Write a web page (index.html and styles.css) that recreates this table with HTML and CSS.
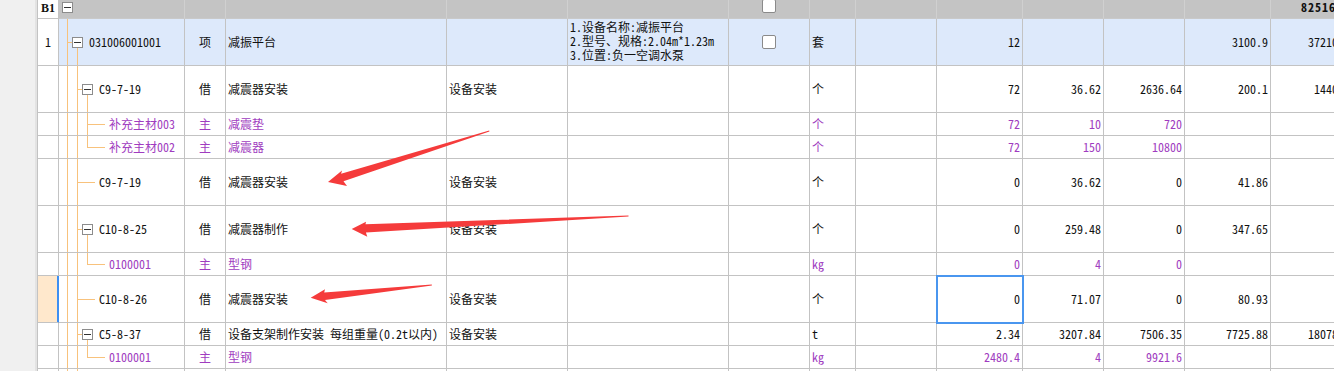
FILE: index.html
```html
<!DOCTYPE html>
<html lang="zh-CN">
<head>
<meta charset="utf-8">
<title>分部分项</title>
<link rel="stylesheet" href="styles.css">
</head>
<body>
<div class="page">
  <div class="strip"></div>
  <div class="sheet">
    <div class="row h">
      <div class="c m b1">B1</div>
      <div class="c tree top"><i class="bx open"><b></b></i></div>
      <div class="c"></div><div class="c"></div><div class="c"></div><div class="c"></div>
      <div class="c m top"><span class="cb hcb"></span></div>
      <div class="c"></div><div class="c"></div><div class="c"></div><div class="c"></div><div class="c"></div><div class="c"></div>
      <div class="c n tot">82516.38</div>
    </div>

    <div class="row sel">
      <div class="c m">1</div>
      <div class="c tree"><i class="g mid"></i><i class="bx open"><b></b></i><span class="t">031006001001</span></div>
      <div class="c m">项</div>
      <div class="c">减振平台</div>
      <div class="c"></div>
      <div class="c d"><span>1.设备名称:减振平台<br>2.型号、规格:2.04m*1.23m<br>3.位置:负一空调水泵</span></div>
      <div class="c m"><span class="cb"></span></div>
      <div class="c">套</div>
      <div class="c"></div>
      <div class="c n">12</div>
      <div class="c"></div>
      <div class="c"></div>
      <div class="c n">3100.9</div>
      <div class="c n">37210.80</div>
    </div>

    <div class="row">
      <div class="c"></div>
      <div class="c tree"><i class="g"></i><i class="g mid"></i><i class="bx open"><b></b></i><span class="t">C9-7-19</span></div>
      <div class="c m">借</div>
      <div class="c">减震器安装</div>
      <div class="c">设备安装</div>
      <div class="c"></div>
      <div class="c"></div>
      <div class="c">个</div>
      <div class="c"></div>
      <div class="c n">72</div>
      <div class="c n">36.62</div>
      <div class="c n">2636.64</div>
      <div class="c n">200.1</div>
      <div class="c n">14407.2</div>
    </div>

    <div class="row s mat">
      <div class="c"></div>
      <div class="c tree"><i class="g"></i><i class="g"></i><i class="g mid"></i><i class="lf"></i><span class="t">补充主材003</span></div>
      <div class="c m">主</div>
      <div class="c">减震垫</div>
      <div class="c"></div>
      <div class="c"></div>
      <div class="c"></div>
      <div class="c">个</div>
      <div class="c"></div>
      <div class="c n">72</div>
      <div class="c n">10</div>
      <div class="c n">720</div>
      <div class="c"></div>
      <div class="c"></div>
    </div>

    <div class="row s mat">
      <div class="c"></div>
      <div class="c tree"><i class="g"></i><i class="g"></i><i class="g last"></i><i class="lf"></i><span class="t">补充主材002</span></div>
      <div class="c m">主</div>
      <div class="c">减震器</div>
      <div class="c"></div>
      <div class="c"></div>
      <div class="c"></div>
      <div class="c">个</div>
      <div class="c"></div>
      <div class="c n">72</div>
      <div class="c n">150</div>
      <div class="c n">10800</div>
      <div class="c"></div>
      <div class="c"></div>
    </div>

    <div class="row">
      <div class="c"></div>
      <div class="c tree"><i class="g"></i><i class="g mid"></i><i class="lf"></i><span class="t">C9-7-19</span></div>
      <div class="c m">借</div>
      <div class="c">减震器安装</div>
      <div class="c">设备安装</div>
      <div class="c"></div>
      <div class="c"></div>
      <div class="c">个</div>
      <div class="c"></div>
      <div class="c n">0</div>
      <div class="c n">36.62</div>
      <div class="c n">0</div>
      <div class="c n">41.86</div>
      <div class="c"></div>
    </div>

    <div class="row">
      <div class="c"></div>
      <div class="c tree"><i class="g"></i><i class="g mid"></i><i class="bx open"><b></b></i><span class="t">C10-8-25</span></div>
      <div class="c m">借</div>
      <div class="c">减震器制作</div>
      <div class="c">设备安装</div>
      <div class="c"></div>
      <div class="c"></div>
      <div class="c">个</div>
      <div class="c"></div>
      <div class="c n">0</div>
      <div class="c n">259.48</div>
      <div class="c n">0</div>
      <div class="c n">347.65</div>
      <div class="c"></div>
    </div>

    <div class="row s mat">
      <div class="c"></div>
      <div class="c tree"><i class="g"></i><i class="g"></i><i class="g last"></i><i class="lf"></i><span class="t">0100001</span></div>
      <div class="c m">主</div>
      <div class="c">型钢</div>
      <div class="c"></div>
      <div class="c"></div>
      <div class="c"></div>
      <div class="c">kg</div>
      <div class="c"></div>
      <div class="c n">0</div>
      <div class="c n">4</div>
      <div class="c n">0</div>
      <div class="c"></div>
      <div class="c"></div>
    </div>

    <div class="row">
      <div class="c mark"></div>
      <div class="c tree"><i class="g"></i><i class="g mid"></i><i class="lf"></i><span class="t">C10-8-26</span></div>
      <div class="c m">借</div>
      <div class="c">减震器安装</div>
      <div class="c">设备安装</div>
      <div class="c"></div>
      <div class="c"></div>
      <div class="c">个</div>
      <div class="c"></div>
      <div class="c n focus">0</div>
      <div class="c n">71.07</div>
      <div class="c n">0</div>
      <div class="c n">80.93</div>
      <div class="c"></div>
    </div>

    <div class="row s">
      <div class="c"></div>
      <div class="c tree"><i class="g"></i><i class="g mid"></i><i class="bx open"><b></b></i><span class="t">C5-8-37</span></div>
      <div class="c m">借</div>
      <div class="c">设备支架制作安装 每组重量(0.2t以内)</div>
      <div class="c">设备安装</div>
      <div class="c"></div>
      <div class="c"></div>
      <div class="c">t</div>
      <div class="c"></div>
      <div class="c n">2.34</div>
      <div class="c n">3207.84</div>
      <div class="c n">7506.35</div>
      <div class="c n">7725.88</div>
      <div class="c n">18078.56</div>
    </div>

    <div class="row s mat">
      <div class="c"></div>
      <div class="c tree"><i class="g"></i><i class="g"></i><i class="g last"></i><i class="lf"></i><span class="t">0100001</span></div>
      <div class="c m">主</div>
      <div class="c">型钢</div>
      <div class="c"></div>
      <div class="c"></div>
      <div class="c"></div>
      <div class="c">kg</div>
      <div class="c"></div>
      <div class="c n">2480.4</div>
      <div class="c n">4</div>
      <div class="c n">9921.6</div>
      <div class="c"></div>
      <div class="c"></div>
    </div>

    <div class="row s">
      <div class="c"></div>
      <div class="c tree"><i class="g"></i><i class="g"></i></div>
      <div class="c"></div><div class="c"></div><div class="c"></div><div class="c"></div><div class="c"></div>
      <div class="c"></div><div class="c"></div><div class="c"></div><div class="c"></div><div class="c"></div>
      <div class="c"></div><div class="c"></div>
    </div>
  </div>

  <svg class="arrows" width="1334" height="371" viewBox="0 0 1334 371" aria-hidden="true">
    <polygon points="328,182 342,170.5 341.1,173.7 489.2,130.4 489.4,131.4 343.5,181.3 347,186"/>
    <polygon points="351.7,229 366,221.7 365.5,224.2 628.5,215.6 628.5,216.6 365.9,232.6 367.3,236.7"/>
    <polygon points="310.7,297.7 325,289.3 324.2,292.6 431.8,284.6 431.9,285.6 325,300 327.7,303.3"/>
  </svg>
</div>
</body>
</html>
```

FILE: styles.css
```css
:root {
  --grid: #c3c3c3;
  --ln: #f8c27c;
  --purple: #a03cc0;
}

html, body {
  margin: 0;
  padding: 0;
  overflow: hidden;
  background: #ffffff;
}

body {
  font-family: "Noto Sans Mono CJK SC", "Liberation Mono", "Noto Sans CJK SC", monospace;
  font-size: 12px;
  color: #111111;
}

.page {
  position: relative;
  display: flex;
  width: 1334px;
  height: 371px;
  overflow: hidden;
}

.strip {
  flex: none;
  width: 35px;
  background: #f0f0f0;
  border-right: 2px solid #e3e3e3;
}

.sheet {
  flex: none;
  border-left: 1px solid var(--grid);
}

.row {
  display: grid;
  grid-template-columns: 21px 126px 41px 221px 121px 161px 81px 46px 81px 86px 81px 81px 86px 88px;
  height: 47px;
}

.row.s {
  height: 23px;
}

.row.h {
  height: 19px;
}

.c {
  box-sizing: border-box;
  display: flex;
  align-items: center;
  padding: 0 2px;
  border-right: 1px solid var(--grid);
  border-bottom: 1px solid var(--grid);
  white-space: nowrap;
  overflow: hidden;
  line-height: 14px;
}

.c.n {
  justify-content: flex-end;
}

.c.m {
  justify-content: center;
}

/* header */
.row.h .c {
  background: #c4c4c4;
  border-right-color: #d0d0d0;
  border-bottom-color: #c9c9c9;
  align-items: flex-start;
}

.row.h .c.b1 {
  background: #ffffff;
  border-right-color: var(--grid);
  border-bottom-color: var(--grid);
  font-family: "Liberation Serif", serif;
  font-weight: bold;
  font-size: 12px;
  padding-top: 1px;
}

.row.h .tot {
  font-weight: bold;
  letter-spacing: 1px;
  padding-right: 1px;
}

.hcb {
  margin-top: -1px;
}

/* selected (blue) row */
.row.sel .c {
  background: #dde9fb;
}

.row.sel .c:first-child {
  background: #ffffff;
}

/* material rows */
.row.mat .c {
  color: var(--purple);
}

/* description */
.c.d {
  padding-left: 2px;
  padding-bottom: 2px;
}

/* checkbox */
.cb {
  display: block;
  box-sizing: border-box;
  width: 14px;
  height: 14px;
  border: 1px solid #8a8a8a;
  border-radius: 2px;
  background: #ffffff;
}

/* tree column */
.c.tree {
  align-items: stretch;
  padding: 0 0 0 3px;
}

.c.tree .t {
  align-self: center;
  margin-left: 7px;
}

.g {
  flex: none;
  width: 10px;
  background: linear-gradient(var(--ln), var(--ln)) 5px 0 / 1px 100% no-repeat;
}

.g.mid {
  background:
    linear-gradient(var(--ln), var(--ln)) 5px 0 / 1px 100% no-repeat,
    linear-gradient(var(--ln), var(--ln)) 5px 50% / 5px 1px no-repeat;
}

.g.last {
  background:
    linear-gradient(var(--ln), var(--ln)) 5px 0 / 1px 50% no-repeat,
    linear-gradient(var(--ln), var(--ln)) 5px 50% / 5px 1px no-repeat;
}

.lf {
  flex: none;
  width: 13px;
  margin-right: -3px;
  background: linear-gradient(var(--ln), var(--ln)) 0 50% / 100% 1px no-repeat;
}

.bx {
  flex: none;
  width: 10px;
  display: flex;
  align-items: center;
}

.bx.open {
  background: linear-gradient(var(--ln), var(--ln)) 5px 100% / 1px 50% no-repeat;
}

.bx b {
  flex: none;
  display: block;
  box-sizing: border-box;
  width: 11px;
  height: 11px;
  border: 1px solid #8c8c8c;
  background: linear-gradient(#333333, #333333) center / 7px 1px no-repeat, #ffffff;
}

.row.h .bx {
  align-items: flex-start;
  padding-top: 2px;
}

.row.h .bx.open {
  background: linear-gradient(var(--ln), var(--ln)) 5px 100% / 1px 8px no-repeat;
}

/* current-row marker and focused cell */
.c.mark {
  background: #ffe8cc;
  border-right-color: #3d8ff2;
  box-shadow: inset -1px 0 0 #3d8ff2;
}

.c.focus {
  position: relative;
  z-index: 1;
  outline: 2px solid #4a96ef;
  outline-offset: -1px;
}

/* annotation arrows */
.arrows {
  position: absolute;
  left: 0;
  top: 0;
  pointer-events: none;
  fill: #f53b3b;
}
```
